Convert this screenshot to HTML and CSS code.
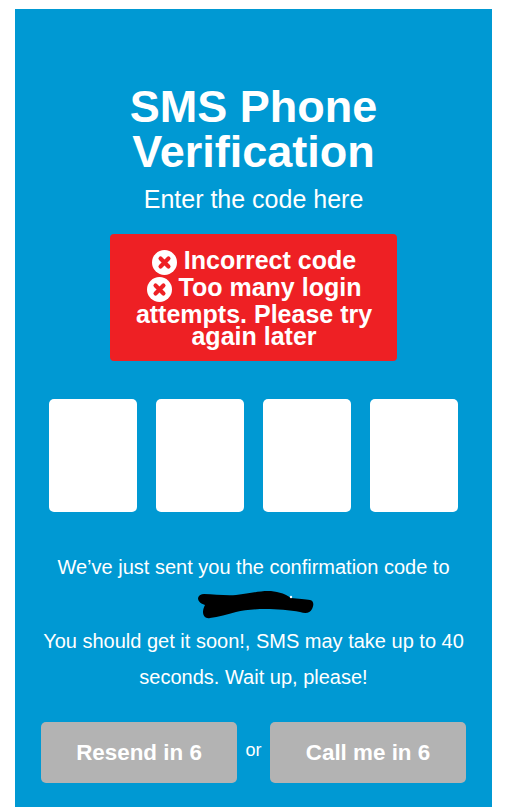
FILE: index.html
```html
<!DOCTYPE html>
<html lang="en">
<head>
    <meta charset="UTF-8">
    <meta name="viewport" content="width=device-width, initial-scale=1.0">
    <title>SMS Phone Verification</title>
    <link rel="stylesheet" href="styles.css">
</head>
<body>
    <div class="card">
        <h1 class="title">SMS Phone Verification</h1>
        <p class="subtitle">Enter the code here</p>

        <!-- Errors -->
        <div class="error-box">
            <div class="error-line">
                <svg class="error-icon" viewBox="0 0 24 24"><circle cx="12" cy="12" r="12" fill="#fff"/><path d="M8.2 8.2l7.6 7.6M15.8 8.2l-7.6 7.6" stroke="#ee2024" stroke-width="4" stroke-linecap="round"/></svg>
                Incorrect code
            </div>
            <div class="error-line">
                <svg class="error-icon" viewBox="0 0 24 24"><circle cx="12" cy="12" r="12" fill="#fff"/><path d="M8.2 8.2l7.6 7.6M15.8 8.2l-7.6 7.6" stroke="#ee2024" stroke-width="4" stroke-linecap="round"/></svg>
                Too many login attempts. Please try again later
            </div>
        </div>

        <!-- Code inputs -->
        <div class="code-row">
            <input type="text" class="code-input" maxlength="1">
            <input type="text" class="code-input" maxlength="1">
            <input type="text" class="code-input" maxlength="1">
            <input type="text" class="code-input" maxlength="1">
        </div>

        <div class="message">
            <p class="message-line">We’ve just sent you the confirmation code to</p>
            <svg class="scribble" viewBox="0 0 116 29"><path d="M0 8C1 5 3 4 6 4C16 4 28 6 38 5C50 4 60 1 70 1C78 1 86 3 93 8C100 9 108 9 112 10C116 11 116 15 114 19C112 23 108 24 102 22C92 20 78 19 68 19C56 19 46 20 38 22C30 24 20 27 12 28C8 29 5 26 5 22C5 19 6 17 7 15C4 14 0 12 0 8Z" fill="#000"/><circle cx="93" cy="7" r="1.2" fill="#fff"/></svg>
            <p class="message-line">You should get it soon!, SMS may take up to 40 seconds. Wait up, please!</p>
        </div>

        <div class="button-row">
            <button class="wait-button">Resend in 6</button>
            <span class="or-label">or</span>
            <button class="wait-button">Call me in 6</button>
        </div>
    </div>
</body>
</html>
```

FILE: styles.css
```css
/* Global Styles */
* {
    box-sizing: border-box;
    font-family: "Liberation Sans", Arial, sans-serif;
}

body {
    margin: 0;
    padding: 9px 33px 0 15px;
    background-color: #ffffff;
}

/* Card */
.card {
    width: 477px;
    height: 798px;
    overflow: hidden;
    padding: 75px 26px 0;
    background-color: #0099d3;
    color: #ffffff;
    text-align: center;
}

.title {
    margin: 0 auto;
    width: 300px;
    font-size: 45px;
    line-height: 45px;
    font-weight: bold;
}

.subtitle {
    margin: 10px 0 0;
    font-size: 25px;
    line-height: 30px;
}

/* Error box */
.error-box {
    width: 287px;
    height: 127px;
    margin: 20px 0 0 69px;
    padding: 15px 10px 0 11px;
    background-color: #ee2024;
    border-radius: 4px;
    font-size: 25px;
    line-height: 22px;
    font-weight: bold;
}

.error-icon {
    width: 25px;
    height: 25px;
    margin-bottom: 1px;
    vertical-align: -7px;
}

/* Code inputs */
.code-row {
    display: flex;
    gap: 19px;
    margin: 38px 0 0 8px;
}

.code-input {
    width: 88px;
    height: 113px;
    border: none;
    border-radius: 5px;
    background-color: #ffffff;
}

/* Message */
.message {
    margin-top: 37px;
    font-size: 20px;
    line-height: 36.5px;
}

.message-line {
    margin: 0;
}

.scribble {
    display: block;
    width: 116px;
    height: 29px;
    margin: 4px 0 4px 157px;
}

/* Buttons */
.button-row {
    display: flex;
    align-items: center;
    margin-top: 26.5px;
}

.wait-button {
    width: 196px;
    height: 61px;
    border: none;
    border-radius: 5px;
    background-color: #b3b3b3;
    color: #ffffff;
    font-size: 22.4px;
    font-weight: bold;
}

.or-label {
    width: 33px;
    font-size: 18px;
    padding-bottom: 4px;
}
```
